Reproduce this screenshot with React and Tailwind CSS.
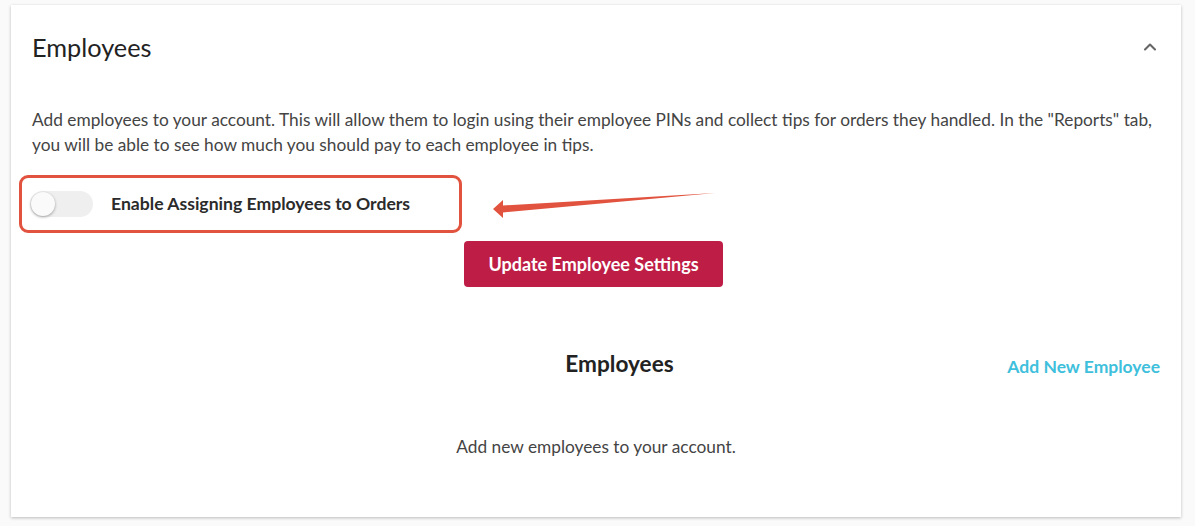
import { ChevronUp } from 'lucide-react';

function Toggle() {
  return (
    <div className="relative h-[26px] w-[63px] rounded-full bg-[#efefef]">
      <div className="absolute left-[1px] top-[1px] h-[24px] w-[24px] rounded-full bg-[#fafafa] shadow-[0_1px_3px_rgba(0,0,0,0.35)]" />
    </div>
  );
}

function App() {
  return (
    <div className="min-h-screen bg-[#fafafa] pl-[11px] pr-[14px] pt-[5px] font-['Lato',sans-serif] text-[#333]">
      <div className="relative h-[512px] bg-white px-[21px] shadow-[0_1px_3px_rgba(0,0,0,0.25)]">
        <div className="flex items-center justify-between pt-[26px]">
          <h1 className="text-[25.3px] leading-[32px] text-[#222]">Employees</h1>
          <ChevronUp className="h-[20px] w-[20px] text-[#666]" strokeWidth={2.5} />
        </div>

        <p className="mt-[44px] text-[17.3px] leading-[25px] text-[#444]">
          Add employees to your account. This will allow them to login using their employee PINs and collect tips for orders they handled. In the "Reports" tab, you will be able to see how much you should pay to each employee in tips.
        </p>

        <div className="mt-[34px] flex items-center gap-[18px]">
          <div className="-ml-[2px]">
            <Toggle />
          </div>
          <span className="text-[17.6px] font-bold text-[#2b2b2b]">Enable Assigning Employees to Orders</span>
        </div>

        {/* annotation box + arrow */}
        <div className="pointer-events-none absolute left-[8px] top-[170px] h-[58px] w-[443px] rounded-[9px] border-[3px] border-[#e2533f]" />
        <svg className="pointer-events-none absolute left-[470px] top-[180px]" width="250" height="40" viewBox="0 0 250 40">
          <path d="M12 24 L22 15 L22 20.5 L234 8 L22 27.5 L22 33 Z" fill="#e2533f" />
        </svg>

        <div className="mt-[24px] flex justify-center">
          <button className="mr-[5px] h-[46px] w-[259px] rounded-[4px] bg-[#be1e45] text-[18px] font-bold text-white">
            Update Employee Settings
          </button>
        </div>

        <div className="mt-[60px] flex items-center">
          <div className="flex-1" />
          <h2 className="ml-[47px] text-[22.6px] font-bold text-[#222]">Employees</h2>
          <div className="flex flex-1 justify-end">
            <a className="mt-[6px] text-[17.5px] font-bold text-[#3ec0dc]">Add New Employee</a>
          </div>
        </div>

        <p className="mt-[53px] text-center text-[17.3px] text-[#444]">Add new employees to your account.</p>
      </div>
    </div>
  );
}

export default App;
